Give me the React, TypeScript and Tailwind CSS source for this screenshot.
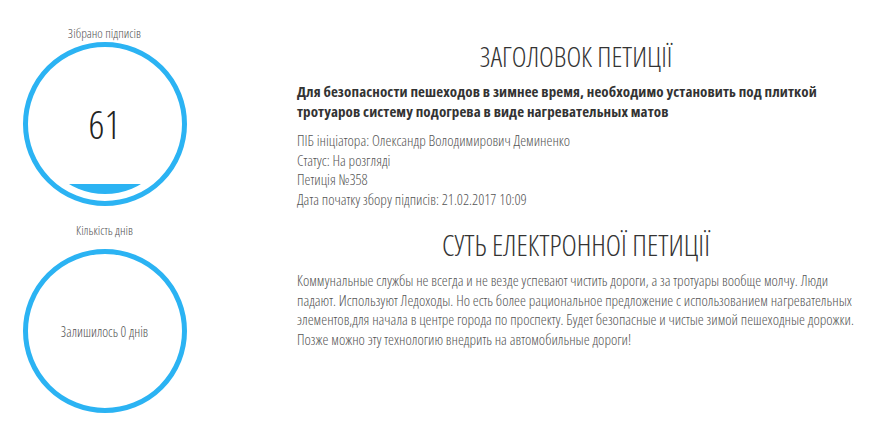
import React from "react";

const font = { fontFamily: '"Open Sans", "Liberation Sans", sans-serif' };

function Gauge({
  label,
  children,
  fill,
  gap,
}: {
  label: string;
  children: React.ReactNode;
  fill?: number;
  gap: string;
}) {
  return (
    <div className="flex flex-col items-center">
      <div className="text-[13px] text-[#555] font-light leading-[16px] [font-stretch:condensed]">{label}</div>
      <div
        className={`relative ${gap} w-[164px] h-[164px] rounded-full border-[5px] border-[#2bb3f3] flex items-center justify-center`}
      >
        {fill ? (
          <div className="absolute inset-[7px] rounded-full overflow-hidden flex flex-col justify-end">
            <div className="bg-[#2bb3f3]" style={{ height: fill }} />
          </div>
        ) : null}
        <div className="relative">{children}</div>
      </div>
    </div>
  );
}

export default function App() {
  return (
    <div className="w-[869px] h-[429px] bg-white flex" style={font}>
      <div className="w-[209px] flex flex-col items-center pt-[25px] gap-[16px]">
        <Gauge label="Зібрано підписів" fill={10} gap="mt-[1px]">
          <span className="text-[39px] font-light text-[#222] [font-stretch:condensed]">61</span>
        </Gauge>
        <Gauge label="Кількість днів" gap="mt-[11px]">
          <span className="text-[14px] font-light text-[#555] [font-stretch:condensed]">Залишилось 0 днів</span>
        </Gauge>
      </div>
      <div className="ml-[88px] w-[558px] flex flex-col">
        <h1 className="mt-[38px] text-center text-[28px] font-light text-[#333] leading-[36px] [font-stretch:condensed]">
          ЗАГОЛОВОК ПЕТИЦІЇ
        </h1>
        <p className="mt-[7px] text-[15px] font-bold text-[#333] leading-[20px] tracking-[0.1px] [font-stretch:semi-condensed]">
          Для безопасности пешеходов в зимнее время, необходимо установить под плиткой тротуаров систему подогрева в виде нагревательных матов
        </p>
        <div className="mt-[10px] text-[15px] font-light text-[#555] leading-[19.7px] [font-stretch:79%]">
          <div>ПІБ ініціатора: Олександр Володимирович Деминенко</div>
          <div>Статус: На розгляді</div>
          <div>Петиція №358</div>
          <div>Дата початку збору підписів: 21.02.2017 10:09</div>
        </div>
        <h2 className="mt-[17px] text-center text-[29px] font-light text-[#333] leading-[36px] [font-stretch:condensed]">
          СУТЬ ЕЛЕКТРОННОЇ ПЕТИЦІЇ
        </h2>
        <p className="mt-[8px] text-[15px] font-light text-[#555] leading-[19.7px] [font-stretch:77%]">
          Коммунальные службы не всегда и не везде успевают чистить дороги, а за тротуары вообще молчу. Люди падают. Используют Ледоходы. Но есть более рациональное предложение с использованием нагревательных элементов,для начала в центре города по проспекту. Будет безопасные и чистые зимой пешеходные дорожки. Позже можно эту технологию внедрить на автомобильные дороги!
        </p>
      </div>
    </div>
  );
}
